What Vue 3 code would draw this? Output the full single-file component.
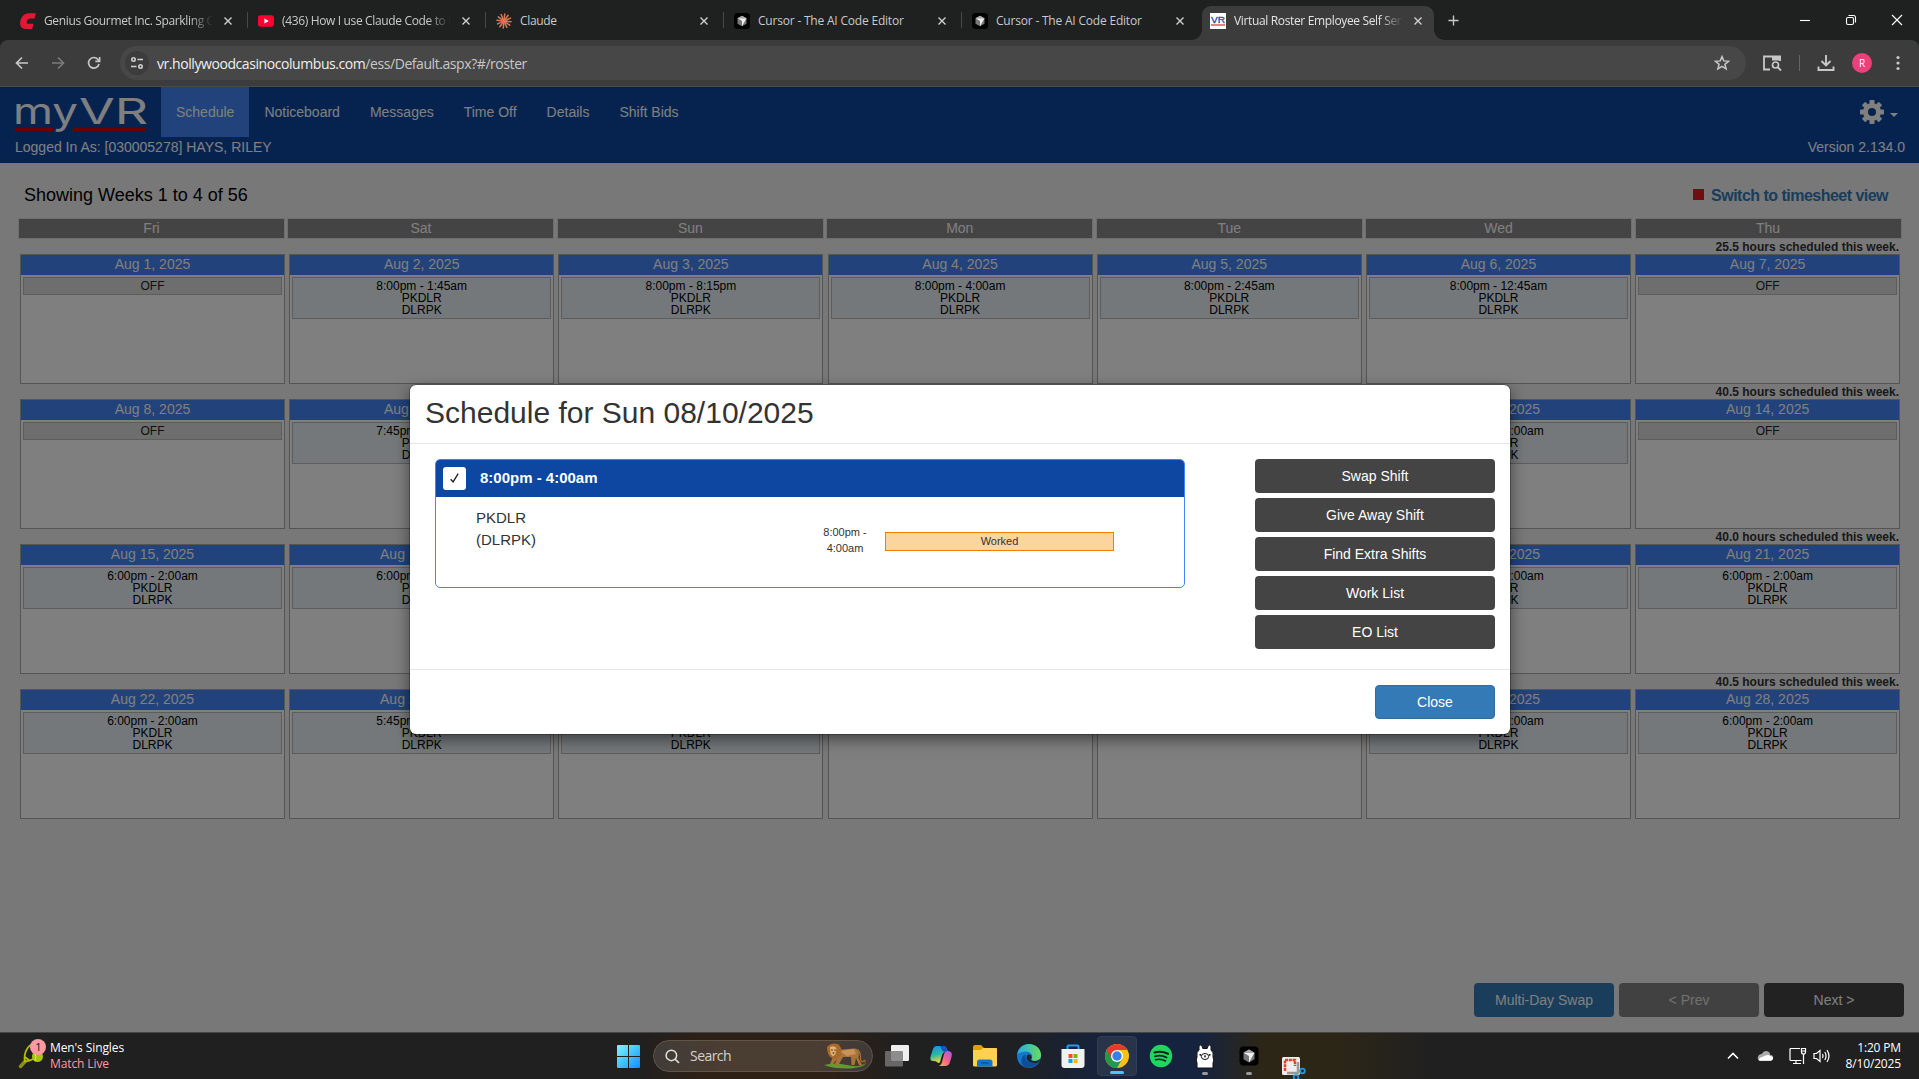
<script setup>
const tabs = [
  { icon: 'c', title: 'Genius Gourmet Inc. Sparkling Ca', fade: true },
  { icon: 'yt', title: '(436) How I use Claude Code to b', fade: true },
  { icon: 'claude', title: 'Claude' },
  { icon: 'cursor', title: 'Cursor - The AI Code Editor' },
  { icon: 'cursor', title: 'Cursor - The AI Code Editor', last: true },
  { icon: 'vr', title: 'Virtual Roster Employee Self Serv', fade: true, active: true },
]
const nav = ['Schedule', 'Noticeboard', 'Messages', 'Time Off', 'Details', 'Shift Bids']
const days = ['Fri', 'Sat', 'Sun', 'Mon', 'Tue', 'Wed', 'Thu']
const off = null
const weeks = [
  { hours: '25.5', start: 1, shifts: [off, '8:00pm - 1:45am', '8:00pm - 8:15pm', '8:00pm - 4:00am', '8:00pm - 2:45am', '8:00pm - 12:45am', off] },
  { hours: '40.5', start: 8, shifts: [off, '7:45pm - 4:00am', '8:00pm - 4:00am', '8:00pm - 4:00am', '8:00pm - 4:00am', '8:00pm - 4:00am', off] },
  { hours: '40.0', start: 15, shifts: ['6:00pm - 2:00am', '6:00pm - 2:00am', '6:00pm - 2:00am', off, off, '6:00pm - 2:00am', '6:00pm - 2:00am'] },
  { hours: '40.5', start: 22, shifts: ['6:00pm - 2:00am', '5:45pm - 2:00am', '6:00pm - 2:00am', off, off, '6:00pm - 2:00am', '6:00pm - 2:00am'] },
]
const actions = ['Swap Shift', 'Give Away Shift', 'Find Extra Shifts', 'Work List', 'EO List']
const rays = Array.from({ length: 12 }, (_, i) => i * 30)
const teeth = Array.from({ length: 8 }, (_, i) => i * 45)
</script>

<template>
  <div class="screen">
    <header class="tabstrip">
      <div v-for="(t, i) in tabs" :key="i" class="tab" :class="{ active: t.active, sep: !t.active && !t.last }">
        <svg class="fav" viewBox="0 0 16 16">
          <path v-if="t.icon === 'c'" d="M15.800 0.200 14.600 5.600H10.500C8.500 5.600 7.200 6.600 6.800 8.200 6.400 10.200 7.200 10.800 8.600 10.800H13.400L12.200 16H6C1.600 16-.4 13 .2 9 1 3.400 4.600.2 9.400.2Z" fill="#e31837" />
          <g v-else-if="t.icon === 'yt'"><rect y="2.300" width="16" height="11.400" rx="2.600" fill="#ff0033" /><path d="M6.400 5.600 10.800 8 6.400 10.400Z" fill="#fff" /></g>
          <g v-else-if="t.icon === 'claude'" stroke="#d97757" stroke-width="1.500" stroke-linecap="round">
            <path v-for="r in rays" :key="r" d="M8 7V.9" :transform="`rotate(${r + 6} 8 8)`" />
          </g>
          <g v-else-if="t.icon === 'cursor'"><rect width="16" height="16" rx="3.500" fill="#000" /><path d="M8 2.700 12.500 5.300V10.700L8 13.300 3.500 10.700V5.300Z" fill="#777" /><path d="M3.500 5.300H12.500L8 13.300V8Z" fill="#eee" /><path d="M8 2.700 12.500 5.300H3.500Z" fill="#aaa" /></g>
          <g v-else><rect width="16" height="16" fill="#fff" /><text x="1" y="10" font-family="Liberation Sans, sans-serif" font-size="8.500" textLength="14" lengthAdjust="spacingAndGlyphs" fill="#1d4ba5" stroke="#1d4ba5" stroke-width=".3">VR</text><path d="M1 12H15" stroke="#e0393e" stroke-width="1.300" /></g>
        </svg>
        <span class="tab-title" :class="{ fade: t.fade, roomy: t.icon === 'cursor' }">{{ t.title }}</span>
        <svg class="tab-x" viewBox="0 0 8 8"><path d="M.5.5 7.500 7.500M7.500.5.5 7.500" /></svg>
      </div>
      <svg class="plus" viewBox="0 0 12 12"><path d="M6 .5V11.500M.5 6H11.500" stroke="#c8c8c8" stroke-width="1.500" /></svg>
      <div class="win">
        <svg viewBox="0 0 12 12"><path d="M1 6.500H11" /></svg>
        <svg viewBox="0 0 12 12"><rect x="1.500" y="3.500" width="7" height="7" rx="1.500" /><path d="M3.500 1.500H8.500Q10.500 1.500 10.500 3.500V8.500" /></svg>
        <svg viewBox="0 0 12 12"><path d="M1 1 11 11M11 1 1 11" /></svg>
      </div>
    </header>

    <div class="toolbar-wrap">
      <div class="toolbar">
        <svg class="tb" viewBox="0 0 16 16"><path d="M14 8H3M8 2.500 2.500 8 8 13.500" /></svg>
        <svg class="tb dim" viewBox="0 0 16 16"><path d="M2 8H13M8 2.500 13.500 8 8 13.500" /></svg>
        <svg class="tb" viewBox="0 0 16 16"><path d="M13 9A5.300 5.300 0 1 1 11.800 4.300L13.300 5.800" /><path d="M13.600 2V6.300H9.300" /></svg>
        <div class="url">
          <span class="site"><svg viewBox="0 0 14 14"><circle cx="3.500" cy="3.500" r="1.700" /><path d="M7.500 3.500H13M1 10.500H6.500" /><circle cx="10.500" cy="10.500" r="1.700" /></svg></span>
          <span class="url-text"><b>vr.hollywoodcasinocolumbus.com</b>/ess/Default.aspx?#/roster</span>
          <svg class="star" viewBox="0 0 16 16"><path d="M8 1.600 9.800 5.900 14.500 6.300 10.900 9.300 12.100 13.900 8 11.400 3.900 13.900 5.100 9.300 1.500 6.300 6.200 5.900Z" /></svg>
        </div>
        <svg class="lens" viewBox="0 0 20 18"><path d="M8 15.500H2V2.500H18V7" fill="none" stroke="#c7c7c7" stroke-width="1.800" /><path d="M10 2H18.900V6.500H10Z" fill="#c7c7c7" /><circle cx="13.500" cy="11" r="3" fill="none" stroke="#c7c7c7" stroke-width="1.700" /><path d="M15.500 13 19 16.500" stroke="#c7c7c7" stroke-width="1.800" /></svg>
        <i class="tb-sep"></i>
        <svg class="dl" viewBox="0 0 18 18"><path d="M9 1V11M4.500 7 9 11.500 13.500 7M1.500 12.500V16H16.500V12.500" fill="none" stroke="#c7c7c7" stroke-width="1.900" /></svg>
        <span class="avatar">R</span>
        <svg class="dots" viewBox="0 0 4 16"><circle cx="2" cy="2.500" r="1.600" /><circle cx="2" cy="8" r="1.600" /><circle cx="2" cy="13.500" r="1.600" /></svg>
      </div>
    </div>

    <main class="page">
      <div class="header">
        <div class="nav-row">
          <svg class="logo" viewBox="0 0 131 40">
            <text x="-2" y="28.500" textLength="65" lengthAdjust="spacingAndGlyphs">my</text>
            <text x="64" y="28.500" textLength="69" lengthAdjust="spacingAndGlyphs">VR</text>
            <path d="M0 34.300H38M58 34.300H131" stroke="#d00000" stroke-width="3.200" />
          </svg>
          <nav><a v-for="(n, i) in nav" :key="n" :class="{ on: i === 0 }">{{ n }}</a></nav>
          <svg class="gear" viewBox="0 0 24 24">
            <rect v-for="r in teeth" :key="r" x="9.500" y="0" width="5" height="7" rx=".8" :transform="`rotate(${r} 12 12)`" fill="#fff" />
            <circle cx="12" cy="12" r="6.500" fill="none" stroke="#fff" stroke-width="5" />
          </svg>
          <i class="caret"></i>
        </div>
        <div class="user-row"><span>Logged In As: [030005278] HAYS, RILEY</span><span>Version 2.134.0</span></div>
      </div>

      <div class="title-row">
        <span class="showing">Showing Weeks 1 to 4 of 56</span>
        <span class="switch"><i></i><b>Switch to timesheet view</b></span>
      </div>
      <div class="days"><div v-for="d in days" :key="d">{{ d }}</div></div>
      <section v-for="w in weeks" :key="w.start" class="week">
        <p class="hours">{{ w.hours }} hours scheduled this week.</p>
        <div class="cells">
          <div v-for="(s, i) in w.shifts" :key="i" class="cell">
            <div class="date">Aug {{ w.start + i }}, 2025</div>
            <div v-if="s" class="shift">{{ s }}<br>PKDLR<br>DLRPK</div>
            <div v-else class="shift off">OFF</div>
          </div>
        </div>
      </section>
      <div class="pager">
        <button class="primary">Multi-Day Swap</button>
        <button class="muted">&lt; Prev</button>
        <button>Next &gt;</button>
      </div>

      <div class="backdrop">
        <div class="modal">
          <h2>Schedule for Sun 08/10/2025</h2>
          <div class="modal-body">
            <div class="card">
              <div class="card-head">
                <span class="check"><svg viewBox="0 0 12 12"><path d="M1.800 7.300 4.500 10.300 10 1.200" fill="none" stroke="#222" stroke-width="1.500" /></svg></span>
                <b>8:00pm - 4:00am</b>
              </div>
              <div class="card-body">
                <div class="role">PKDLR<br>(DLRPK)</div>
                <div class="span">8:00pm -<br>4:00am</div>
                <div class="worked">Worked</div>
              </div>
            </div>
            <div class="actions"><button v-for="a in actions" :key="a">{{ a }}</button></div>
          </div>
          <div class="modal-foot"><button>Close</button></div>
        </div>
      </div>
    </main>

    <footer class="taskbar">
      <div class="widget">
        <svg class="racket" viewBox="0 0 28 30">
          <path d="M1.500 27.500 6 22.500" stroke="#8a8f14" stroke-width="3.500" stroke-linecap="round" />
          <path d="M6 22.500C4 14 9 6 15 4.500S24 10 20 15 11 22 6 22.500ZM6 18 11 22" fill="none" stroke="#b5bd00" stroke-width="1.800" />
          <circle cx="18.500" cy="17.500" r="5.500" fill="#a9c500" /><path d="M15.500 13.500Q18 17.500 16 22" stroke="#dbe87a" fill="none" />
          <circle cx="19" cy="8" r="8" fill="#ff99a4" />
          <text x="19.500" y="12" text-anchor="middle" font-family="Open Sans, sans-serif" font-size="11" fill="#111">1</text>
        </svg>
        <div class="match"><span>Men's Singles</span><span class="live">Match Live</span></div>
      </div>

      <div class="dock">
        <svg class="winlogo" viewBox="0 0 23 23">
          <defs><linearGradient id="wl" x1="0" y1="0" x2="1" y2="1"><stop offset="0" stop-color="#83f3ff" /><stop offset="1" stop-color="#0a92fa" /></linearGradient></defs>
          <path d="M1 0H11V11H0V1Q0 0 1 0ZM12 0H22Q23 0 23 1V11H12ZM0 12H11V23H1Q0 23 0 22ZM12 12H23V22Q23 23 22 23H12Z" fill="url(#wl)" />
        </svg>
        <div class="search">
          <svg class="mag" viewBox="0 0 16 16"><circle cx="6.800" cy="6.800" r="5.600" /><path d="M10.800 10.800 15 15" /></svg>
          <span>Search</span>
          <svg class="lion" viewBox="0 0 44 26">
            <path d="M1 22Q12 19 24 22T43 20Q42 24 28 25.500 10 26 1 22Z" fill="#659832" />
            <path d="M7 21 10 14 15 7 30 5.500Q36 5 36 11L35.500 15 38 20 39 22H36L33 15 31.500 22H28.500L28 14 20 14 16 21 12 23 12 21 14 16 10 21Z" fill="#a8743b" />
            <path d="M16 8 31 6 33 11 24 13Z" fill="#c8935a" /><path d="M34.500 6.500Q38 10 37.500 15T42 18" stroke="#a97035" stroke-width="1.300" fill="none" /><circle cx="41.500" cy="18" r="1.600" fill="#915724" />
            <path d="M4 4Q8-1 15 1 20 5 18 12L14 16 9 15Q4 13 4 4Z" fill="#a8692a" /><path d="M7 4Q11 2 13.500 5L12.500 11 10 13.500 7.500 11Z" fill="#dfb272" /><circle cx="9" cy="7" r=".7" fill="#352014" /><circle cx="12" cy="7" r=".7" fill="#352014" /><path d="M9.200 9.500H11.600L10.400 11Z" fill="#352014" />
          </svg>
        </div>
        <div class="app"><svg viewBox="0 0 24 24"><rect x="6" y="1" width="18" height="16" rx="1.200" fill="#efefef" /><rect x="0" y="7" width="18" height="15.500" rx="1.200" fill="#777" opacity=".82" /></svg></div>
        <div class="app"><svg viewBox="0 0 24 24">
          <defs><linearGradient id="c1" x1="0" y1="0" x2=".3" y2="1"><stop offset="0" stop-color="#188ee8" /><stop offset=".55" stop-color="#27b8a8" /><stop offset="1" stop-color="#f4d72c" /></linearGradient><linearGradient id="c2" x1="1" y1="0" x2=".1" y2="1"><stop offset="0" stop-color="#a05cf0" /><stop offset=".5" stop-color="#f45d91" /><stop offset="1" stop-color="#ffad51" /></linearGradient></defs>
          <path d="M8 2H15Q17 2 18 5L19 8H16Q14 8 13 11L11 18Q10 20 8 18 7 17 4 17 0 17 2 11L4 5Q5 2 8 2Z" fill="url(#c1)" /><path d="M11 2H15Q17 2 18 5L19 8H16Q14 8 13 6Z" fill="#1754c9" /><path d="M16 22H9Q12 22 13 18L15 10Q16 7 19 7 24 7 22.500 13L21 18Q20 22 16 22Z" fill="url(#c2)" />
        </svg></div>
        <div class="app"><svg viewBox="0 0 24 24"><path d="M0 3Q0 1 2 1H8L11 4H22Q24 4 24 6V12H0Z" fill="#e2a000" /><path d="M0 6H8L10 4H23Q24 4 24 5V21Q24 22.500 22.500 22.500H1.500Q0 22.500 0 21Z" fill="#ffd052" /><path d="M4 22.500V18Q4 15.500 6.500 15.500H17Q19.500 15.500 19.500 18V22.500Z" fill="#0f76c8" /><path d="M8 19H15.500" stroke="#0a4f91" stroke-width="1.300" /></svg></div>
        <div class="app"><svg viewBox="0 0 24 24">
          <defs><linearGradient id="e1"><stop offset="0" stop-color="#25a9e8" /><stop offset="1" stop-color="#69dc5c" /></linearGradient></defs>
          <circle cx="12" cy="12" r="12" fill="#1577cb" /><path d="M.3 10C1.500 3.500 6.500 0 12 0 19 0 24 5 24 11 24 15 21 17 17.500 17 14.500 17 13.500 15.800 14.500 14.500 17 11 13 7.500 9 7.500 5 7.500 2 9 .3 10Z" fill="url(#e1)" /><path d="M8.500 10.500C7.500 17 12 20.500 21.500 18.500 18 23.500 12 25 7.500 23 2.500 20 4 12 8.500 10.500Z" fill="#0b4e9c" /><path d="M14.500 14.500C13.500 15.800 14.500 17 17.500 17Q21 17 24 14.500L21.800 18.200Q15 20.500 11 17 8 13.500 11 10.500 15.500 10.500 14.500 14.500Z" fill="#1c2333" />
        </svg></div>
        <div class="app"><svg viewBox="0 0 24 24"><path d="M6.500 6V2.500Q6.500 1.500 7.500 1.500H16.500Q17.500 1.500 17.500 2.500V6" fill="none" stroke="#259ce8" stroke-width="2" /><path d="M.5 5H23.500V21Q23.500 24 20.500 24H3.500Q.5 24 .5 21Z" fill="#f1f1f1" /><path d="M7.500 10H11.500V14H7.500Z" fill="#f25022" /><path d="M12.500 10H16.500V14H12.500Z" fill="#7fba00" /><path d="M7.500 15H11.500V19H7.500Z" fill="#00a4ef" /><path d="M12.500 15H16.500V19H12.500Z" fill="#ffb900" /></svg></div>
        <div class="app current"><svg viewBox="0 0 24 24"><circle cx="12" cy="12" r="12" fill="#fbc116" /><path d="M12 12 1.600 6A12 12 0 0 0 12 24L17.200 15Z" fill="#229a4a" /><path d="M1.600 6A12 12 0 0 1 22.400 6H12L6.800 15Z" fill="#e33b2e" /><circle cx="12" cy="12" r="6" fill="#fff" /><circle cx="12" cy="12" r="4.700" fill="#3880e8" /></svg><i class="run"></i></div>
        <div class="app"><svg viewBox="0 0 24 24"><circle cx="12" cy="12" r="11.200" fill="#1ed760" /><g fill="none" stroke="#10241a" stroke-linecap="round"><path d="M5.500 8.500Q12.500 6.500 19 9.800" stroke-width="2.100" /><path d="M6 12.300Q12.500 10.700 17.500 13.500" stroke-width="1.800" /><path d="M6.500 15.800Q12 14.500 16.500 17" stroke-width="1.500" /></g></svg></div>
        <div class="app"><svg viewBox="0 0 24 24"><path d="M4 24V19Q2.500 16 4 13 3 8 6 6 5.500 2 7 .8 9 .5 9.800 4.500H14.200Q15 .5 17 .8 18.500 2 18 6 21 8 20 13 21.500 16 20 19V24Z" fill="#fff" stroke="#111" stroke-width="1" /><ellipse cx="12" cy="12.500" rx="3.700" ry="3" fill="none" stroke="#111" stroke-width="1" /><circle cx="7.300" cy="10.800" r=".9" /><circle cx="16.700" cy="10.800" r=".9" /><path d="M11 12H13M12 12V13.500" stroke="#111" /></svg><i class="run idle"></i></div>
        <div class="app"><svg viewBox="0 0 24 24"><rect x="2.500" y="2.500" width="19" height="19" rx="4" fill="#000" /><path d="M12 5.500 17.500 8.700V15.300L12 18.500 6.500 15.300V8.700Z" fill="#777" /><path d="M6.500 8.700H17.500L12 18.500V12Z" fill="#eee" /><path d="M12 5.500 17.500 8.700H6.500Z" fill="#aaa" /></svg><i class="run idle"></i></div>
        <div class="app snip"><svg viewBox="0 0 24 24"><rect width="18" height="18" rx="1.500" fill="#eee" /><path d="M3 14V3H13V9" fill="none" stroke="#d84524" stroke-width="2.500" stroke-dasharray="3 .7" /><path d="M16 5V16H5" stroke="#999" stroke-width="2.500" fill="none" /><circle cx="20.500" cy="14" r="2.300" fill="none" stroke="#1a9ae0" stroke-width="1.800" /><circle cx="14" cy="20.500" r="2.300" fill="none" stroke="#1a9ae0" stroke-width="1.800" /></svg></div>
      </div>

      <div class="tray">
        <svg class="chev" viewBox="0 0 12 8"><path d="M1 6.500 6 1.500 11 6.500" /></svg>
        <svg class="cloud" viewBox="0 0 18 12"><path d="M3 11Q0 10 1 7 2 4 5 4 7 0 11 1 14 2 14 5 18 5 17 9 16 11 14 11Z" fill="#aaa" /><path d="M2.500 11Q1 9.500 3 8L9 5.500Q12 4 14 6 18 7 16.500 10 15.500 11 14 11Z" fill="#fff" /></svg>
        <svg class="net" viewBox="0 0 18 18"><path d="M11 1.500H2Q1 1.500 1 2.500V12.500Q1 13.500 2 13.500H12.500M7 13.500V16.500M4 16.500H12M14.500 7V17M12.500 1.500H16.500V5Q16.500 7 14.500 7T12.500 5ZM13 4H16" /></svg>
        <svg class="vol" viewBox="0 0 18 16"><path d="M1 5.500H3.500L7 2.500V13.500L3.500 10.500H1ZM9.500 6Q10.800 8 9.500 10M11.800 4Q14.300 8 11.800 12M14 2.200Q18 8 14 13.800" /></svg>
        <div class="clock"><span>1:20 PM</span><span>8/10/2025</span></div>
      </div>
    </footer>
  </div>
</template>

<style>
body { margin: 0; overflow: hidden; }
</style>

<style scoped>
* { box-sizing: border-box; }
.screen { width: 1919px; height: 1079px; display: flex; flex-direction: column; overflow: hidden; font-family: "Liberation Sans", Arial, sans-serif; font-size: 14px; background: #1f2020; }
svg { display: block; flex: none; overflow: visible; }
button { font: inherit; color: #fff; border: 0; padding: 0; border-radius: 4px; height: 34px; }

.tabstrip { height: 40px; display: flex; align-items: flex-end; padding-left: 12px; background: #1f2020; font-family: "Open Sans", "Noto Sans", sans-serif; font-size: 12px; flex: none; }
.tab { width: 238px; height: 34px; display: flex; align-items: center; padding: 0 0 5px 8px; color: #c9cac9; position: relative; }
.tab.sep::after { content: ''; position: absolute; right: 2px; top: 6px; width: 1px; height: 16px; background: #474848; }
.tab.active { width: 232px; background: #3c3c3c; border-radius: 9px 9px 0 0; color: #e3e3e3; }
.tab.active::before, .tab.active::after { content: ''; position: absolute; bottom: 0; width: 10px; height: 10px; }
.tab.active::before { left: -10px; background: radial-gradient(circle at 0 0, transparent 9.500px, #3c3c3c 10px); }
.tab.active::after { right: -10px; background: radial-gradient(circle at 100% 0, transparent 9.500px, #3c3c3c 10px); }
.fav { width: 16px; height: 16px; }
.tab-title { width: 169px; margin-left: 8px; white-space: nowrap; overflow: hidden; letter-spacing: -.35px; }
.tab-title.roomy { letter-spacing: -.2px; }
.tab-title.fade { -webkit-mask-image: linear-gradient(90deg, #000 86%, transparent 100%); mask-image: linear-gradient(90deg, #000 86%, transparent 100%); }
.tab-x { width: 8px; height: 8px; margin-left: 11px; }
.tab-x path { stroke: #d0d0d0; stroke-width: 1.400; }
.plus { width: 11px; height: 11px; margin: 0 0 14px 14px; }
.win { margin-left: auto; display: flex; gap: 34px; padding: 0 16px 14px 0; }
.win svg { width: 12px; height: 12px; fill: none; stroke: #fff; stroke-width: 1.100; }

.toolbar-wrap { background: #1f2020; flex: none; }
.toolbar { height: 47px; background: #3c3c3c; border-radius: 8px 8px 0 0; border-bottom: 1px solid #4a4a4a; display: flex; align-items: center; padding: 0 19px 0 14px; font-family: "Open Sans", "Noto Sans", sans-serif; }
.tb { width: 16px; height: 16px; margin-right: 20px; fill: none; stroke: #c7c7c7; stroke-width: 1.700; }
.tb.dim { stroke: #7b7b7b; }
.url { width: 1626px; height: 34px; margin-left: -2px; border-radius: 17px; background: #474747; display: flex; align-items: center; padding: 0 16px 0 5px; color: #c7c7c7; font-size: 14px; }
.site { width: 24px; height: 24px; border-radius: 50%; background: #3c3c3c; display: flex; align-items: center; justify-content: center; }
.site svg { width: 14px; height: 14px; fill: none; stroke: #d0d0d0; stroke-width: 1.600; }
.url-text { margin-left: 8px; letter-spacing: -.43px; flex: 1; white-space: nowrap; }
.url-text b { font-weight: 400; color: #f0f0f0; }
.star { width: 16px; height: 16px; fill: none; stroke: #c7c7c7; stroke-width: 1.500; }
.lens { width: 20px; height: 18px; margin-left: 16px; }
.tb-sep { width: 1px; height: 16px; background: #656565; margin: 0 17px 0 17px; }
.dl { width: 18px; height: 18px; }
.avatar { width: 20px; height: 20px; margin-left: 17px; border-radius: 50%; background: #ec407a; color: #fff; font-size: 10px; display: flex; align-items: center; justify-content: center; }
.dots { width: 4px; height: 16px; margin-left: auto; fill: #c7c7c7; }

.page { position: relative; height: 945px; flex: none; background: #f1f1f1; }
.header { height: 76px; background: #0d47a1; color: #fff; }
.nav-row { height: 50px; display: flex; padding-left: 15px; }
.logo { width: 131px; height: 40px; margin: 8px 15px 0 0; }
.logo text { font-family: Inter, "Liberation Sans", sans-serif; font-weight: 400; font-size: 36px; fill: #fff; }
nav { display: flex; }
nav a { padding: 0 15px; line-height: 50px; }
nav a.on { background: #4285f4; }
.gear { width: 24px; height: 24px; margin: 13px 6px 0 auto; }
.caret { width: 0; height: 0; margin: 26px 21px 0 0; border: 4px solid transparent; border-top-color: #fff; border-bottom: 0; }
.user-row { display: flex; justify-content: space-between; padding: 0 14px 0 15px; line-height: 20px; }

.title-row { height: 55px; display: flex; justify-content: space-between; padding: 20px 31px 0 24px; line-height: 24px; }
.showing { font-size: 18px; color: #000; }
.switch { display: flex; color: #337ab7; font-size: 16px; letter-spacing: -.52px; line-height: 26px; }
.switch i { width: 11px; height: 11px; background: #e01b22; margin: 6px 7px 0 0; }
.days { display: grid; grid-template-columns: repeat(7, 267px); gap: 2.430px; padding-left: 18px; height: 21px; }
.days div { border: 1px solid #ddd; background: #888; color: #fff; text-align: center; line-height: 18px; }
.week { height: 145px; padding-left: 20px; }
.hours { margin: 0; height: 15px; padding: 1px 20px 0 0; text-align: right; font-weight: 700; font-size: 12px; line-height: 15px; color: #333; }
.cells { display: grid; grid-template-columns: repeat(7, 265px); gap: 4.200px; }
.cell { height: 130px; background: #fff; border: 1px solid #aaa; }
.date { height: 20px; background: #4285f4; color: #fff; text-align: center; line-height: 19px; }
.shift { margin: 2px; height: 42px; border: 1px solid #bbb; background: #e8f0f5; color: #000; font-size: 12px; line-height: 12px; text-align: center; padding-top: 2px; }
.shift.off { height: 18px; background: #ddd; color: #222; }
.pager { position: absolute; right: 15px; bottom: 15px; display: flex; gap: 5px; }
.pager button { width: 140px; background: #444; }
.pager .primary { background: #337ab7; }
.pager .muted { background: #828282; color: #e0e0e0; }

.backdrop { position: absolute; inset: 0; background: rgba(0, 0, 0, .5); }
.modal { position: absolute; left: 410px; top: 298px; width: 1100px; height: 349px; background: #fff; border-radius: 6px; box-shadow: 0 5px 15px rgba(0, 0, 0, .5), 0 0 0 1px rgba(0, 0, 0, .25); color: #333; }
.modal h2 { margin: 0; height: 59px; padding: 10px 15px; border-bottom: 1px solid #e5e5e5; font-size: 30px; font-weight: 400; line-height: 36px; }
.modal-body { height: 225px; padding: 15px 15px 0 25px; display: flex; justify-content: space-between; }
.card { width: 750px; height: 129px; border: 1px solid #4285f4; border-radius: 5px; overflow: hidden; }
.card-head { height: 37px; background: #0d47a1; color: #fff; display: flex; align-items: center; padding-left: 7px; font-size: 15px; gap: 14px; }
.card-head b { padding-bottom: 2px; }
.check { width: 23px; height: 23px; background: #fff; border-radius: 3px; display: flex; align-items: center; justify-content: center; }
.check svg { width: 11px; height: 12px; margin-bottom: 1px; }
.card-body { display: flex; padding: 10px 0 0 40px; }
.role { width: 340px; font-size: 15px; line-height: 22px; }
.span { width: 58px; padding-top: 17px; font-size: 11px; line-height: 16px; text-align: center; }
.worked { width: 229px; height: 19px; margin: 25px 0 0 11px; border: 1px solid #f57c00; background: #fad59f; font-size: 11px; line-height: 17px; text-align: center; }
.actions { width: 240px; display: flex; flex-direction: column; gap: 5px; }
.actions button { background: #444; flex: none; }
.modal-foot { border-top: 1px solid #e5e5e5; padding: 15px; display: flex; justify-content: flex-end; }
.modal-foot button { width: 120px; background: #337ab7; border: 1px solid #2e6da4; }

.taskbar { height: 47px; flex: none; border-top: 1px solid #454545; display: flex; align-items: center; color: #fff; font-family: "Open Sans", "Noto Sans", sans-serif; font-size: 12px; background: linear-gradient(90deg, #202020 640px, #2e2015 700px, #2e2015 830px, #202020 900px, #1e2023 1020px, #16233f 1110px, #16233f 1200px, #2c2617 1260px, #2c2617 1340px, #202020 1430px); }
.widget { width: 617px; display: flex; align-items: center; padding-left: 19px; }
.racket { width: 28px; height: 30px; margin-bottom: 4px; }
.match { display: flex; flex-direction: column; line-height: 16px; margin-left: 3px; letter-spacing: -.1px; }
.live { color: #ff99a4; }
.dock { display: flex; align-items: center; }
.winlogo { width: 23px; height: 23px; margin-right: 13px; }
.search { width: 220px; height: 32px; border-radius: 16px; background: linear-gradient(90deg, #403c38, #4a3d32 30%, #4a3d32 75%, #3e3a37); border: 1px solid #625447; display: flex; align-items: center; padding: 0 5px 0 11px; font-size: 14px; color: #d5d0cc; margin-right: 4px; }
.search span { flex: 1; margin-left: 10px; padding-bottom: 1px; letter-spacing: -.55px; }
.mag { width: 15px; height: 15px; fill: none; stroke: #e3e0dd; stroke-width: 1.600; }
.lion { width: 44px; height: 26px; }
.app { width: 40px; height: 40px; margin-right: 4px; border-radius: 4px; display: flex; align-items: center; justify-content: center; position: relative; }
.app svg { width: 24px; height: 24px; }
.app.current { background: #28344a; border: 1px solid #323d51; }
.run { position: absolute; bottom: 1px; left: 50%; width: 14px; height: 3px; margin-left: -7px; border-radius: 2px; background: #4cc2ff; }
.run.idle { width: 6px; margin-left: -3px; background: #999; }
.snip svg { margin: 26px 0 0 1px; }
.tray { margin-left: auto; display: flex; align-items: center; padding-right: 18px; }
.tray svg { fill: none; stroke: #fff; stroke-width: 1.200; }
.tray .chev { width: 12px; height: 8px; margin-right: 18px; stroke-width: 1.600; }
.tray .cloud { width: 17px; height: 12px; stroke: none; margin-right: 15px; }
.tray .net { width: 18px; height: 18px; margin-right: 6px; }
.tray .vol { width: 18px; height: 16px; margin-right: 13px; }
.clock { width: 57px; display: flex; flex-direction: column; align-items: flex-end; line-height: 16px; letter-spacing: -.15px; }
</style>
